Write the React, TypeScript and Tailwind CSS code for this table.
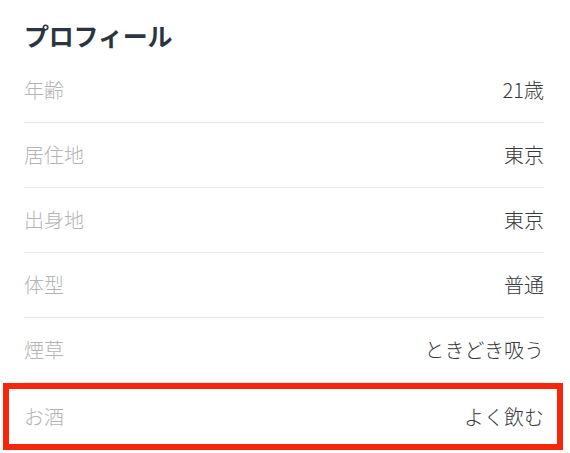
import React from 'react';

interface ProfileRow {
  label: string;
  value: string;
}

const rows: ProfileRow[] = [
  { label: '年齢', value: '21歳' },
  { label: '居住地', value: '東京' },
  { label: '出身地', value: '東京' },
  { label: '体型', value: '普通' },
  { label: '煙草', value: 'ときどき吸う' },
];

const highlighted: ProfileRow = { label: 'お酒', value: 'よく飲む' };

const App: React.FC = () => {
  return (
    <div
      className="w-[570px] h-[453px] overflow-hidden bg-white pl-[24px] pr-[26px]"
      style={{ fontFamily: '"Noto Sans CJK JP", "Noto Sans", sans-serif' }}
    >
      {/* Title */}
      <h2 className="pt-[20px] pb-[7px] leading-[31px] text-[25px] font-bold text-[#2d3441] tracking-[-0.2px]">
        プロフィール
      </h2>

      {/* Rows */}
      {rows.map((row) => (
        <div
          key={row.label}
          className="flex h-[65px] items-center justify-between border-b border-[#e7e7e7] text-[20px] font-light"
        >
          <span className="text-[#b4b4b4]">{row.label}</span>
          <span className="text-[#36383b]">{row.value}</span>
        </div>
      ))}

      {/* Highlighted row */}
      <div className="-ml-[21px] -mr-[19px] flex h-[67px] items-center justify-between border-[6px] border-[#f5260c] pl-[15px] pr-[13px] text-[20px] font-light">
        <span className="text-[#b4b4b4]">{highlighted.label}</span>
        <span className="text-[#36383b]">{highlighted.value}</span>
      </div>
    </div>
  );
};

export default App;
